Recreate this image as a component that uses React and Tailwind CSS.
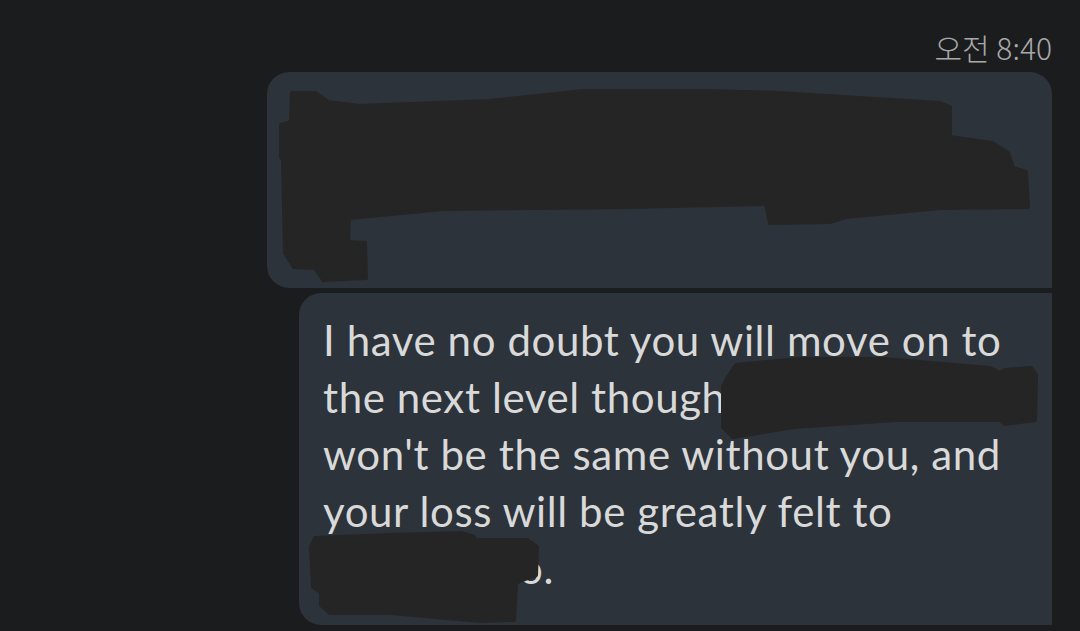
export default function App() {
  const lines = [
    'I have no doubt you will move on to',
    'the next level though',
    "won't be the same without you, and",
    'your loss will be greatly felt to',
  ]

  return (
    <div className="relative w-[1080px] h-[631px] overflow-hidden bg-[#1b1c1e] flex flex-col items-end pr-[28px]">
      {/* timestamp */}
      <div
        className="mt-[28px] h-[38px] text-[30px] leading-[38px] font-light text-[#a9a9a9]"
        style={{ fontFamily: '"Noto Sans CJK KR", "Noto Sans", sans-serif' }}
      >
        오전 8:40
      </div>

      {/* first bubble (fully redacted) */}
      <div className="mt-[6px] w-[785px] h-[216px] rounded-[22px] rounded-br-none bg-[#2c333a]" />

      {/* second bubble */}
      <div
        className="mt-[5px] w-[753px] h-[332px] rounded-l-[22px] bg-[#2c333a] pl-[24px] pt-[19px] text-[42px] leading-[57px] tracking-[0.6px] text-[#d9d9d9]"
        style={{ fontFamily: 'Lato, "Noto Sans", sans-serif' }}
      >
        {lines.map(l => (
          <div key={l} className="whitespace-nowrap">{l}</div>
        ))}
        <div className="whitespace-nowrap pl-[196px]">o.</div>
      </div>

      {/* redaction scribbles */}
      <svg className="absolute inset-0 pointer-events-none" width="1080" height="631" viewBox="0 0 1080 631">
        <g fill="#252525" stroke="#252525" strokeWidth="4" strokeLinejoin="round">
          <path d="M292 93 L315 93 L328 102 L359 106 L490 101 L584 91 L704 91 L778 93 L940 103 L950 107 L950 137 L992 143 L1008 153 L1013 168 L1026 172 L1028 207 L940 208 L846 217 L830 222 L770 223 L766 204 L626 207 L443 209 L349 218 L348 242 L365 243 L366 278 L323 280 L315 268 L294 267 L285 253 L283 160 L281 157 L281 125 L291 122 Z" />
          <path d="M736 365 L799 359 L884 359 L990 368 L1000 373 L1005 370 L1031 368 L1036 375 L1035 420 L1005 424 L1000 420 L895 420 L794 427 L733 437 L723 427 L723 387 L728 377 Z" />
          <path d="M315 538 L391 535 L461 533 L474 537 L474 540 L527 540 L537 547 L536 575 L522 580 L516 583 L514 620 L481 621 L391 613 L330 613 L321 605 L321 592 L313 587 L311 547 Z" />
        </g>
      </svg>
    </div>
  )
}
